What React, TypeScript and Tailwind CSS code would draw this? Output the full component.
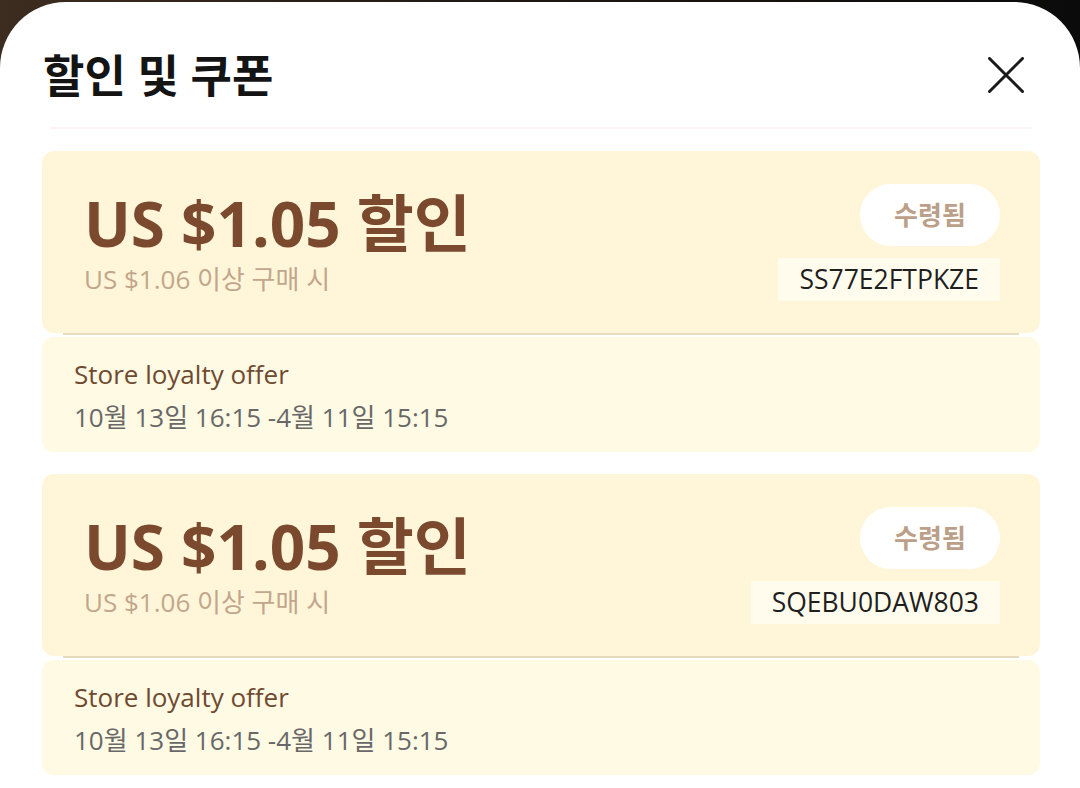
import React from "react";

const coupons = [
  { code: "SS77E2FTPKZE" },
  { code: "SQEBU0DAW803" },
];

function CouponCard(props: { code: string }) {
  return (
    <div className="flex flex-col">
      <div className="h-[182px] rounded-xl bg-[#fff6d9] pl-[42px] pr-[40px] flex justify-between">
        <div className="pt-[40px]">
          <div className="text-[62px] leading-[64px] font-bold text-[#7b4a2e]">
            US $1.05 할인
          </div>
          <div className="mt-[8px] text-[26px] leading-[32px] text-[#c2a68c]">
            US $1.06 이상 구매 시
          </div>
        </div>
        <div className="pt-[33px] flex flex-col items-end">
          <div className="w-[140px] h-[62px] rounded-full bg-white flex items-center justify-center text-[26px] font-bold text-[#bb9f88]">
            수령됨
          </div>
          <div className="mt-[12px] h-[43px] px-[21px] bg-[#fffcee] flex items-center text-[26.5px] text-[#1f1f1f]">
            {props.code}
          </div>
        </div>
      </div>
      <div className="h-[2px] mx-[21px] bg-[#e6dcbd]" />
      <div className="mt-[2px] h-[115px] rounded-xl bg-[#fffae4] pl-[32px] pt-[21px]">
        <div className="text-[26px] leading-[32px] text-[#6f4a30]">
          Store loyalty offer
        </div>
        <div className="mt-[11px] text-[26px] leading-[32px] text-[#686868]">
          10월 13일 16:15 -4월 11일 15:15
        </div>
      </div>
    </div>
  );
}

export default function App() {
  return (
    <div
      className="w-[1080px] h-[788px] overflow-hidden bg-gradient-to-r from-[#3d2c20] via-[#1c1712] to-[#0b0b0b]"
      style={{ fontFamily: '"Open Sans", "Noto Sans CJK KR", sans-serif' }}
    >
      <div className="mt-[2px] h-[786px] bg-white rounded-t-[66px] pl-[42px] pr-[40px]">
        <div className="pt-[48px] h-[100px] flex items-center justify-between">
          <h1 className="text-[45px] leading-[52px] font-bold text-[#141414] pl-[1px]">
            할인 및 쿠폰
          </h1>
          <button className="mr-[16px] mb-[2px]">
            <svg width="36" height="36" viewBox="0 0 36 36" fill="none">
              <path
                d="M1.5 1.5L34.5 34.5M34.5 1.5L1.5 34.5"
                stroke="#1a1a1a"
                strokeWidth="3"
                strokeLinecap="round"
              />
            </svg>
          </button>
        </div>
        <div className="mt-[25px] mx-[8px] h-[2px] rounded-full bg-[#fbf3f3]" />
        <div className="mt-[22px] flex flex-col gap-[22px]">
          {coupons.map((c, i) => (
            <CouponCard key={i} code={c.code} />
          ))}
        </div>
      </div>
    </div>
  );
}
